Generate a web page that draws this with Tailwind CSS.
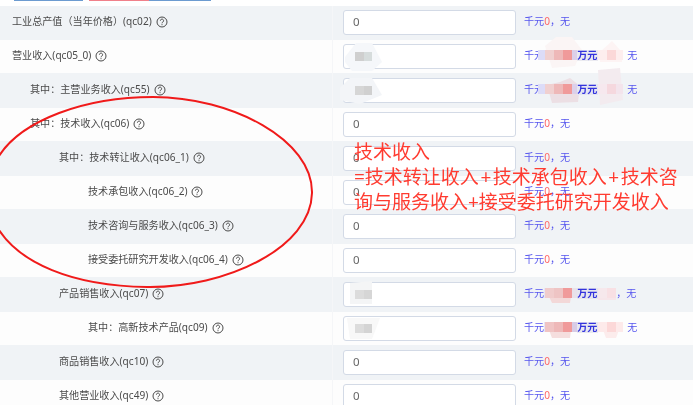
<!DOCTYPE html>
<html lang="zh-CN">
<head>
    <meta charset="UTF-8">
    <title>技术收入</title>
    <script src="https://cdn.jsdelivr.net/npm/@tailwindcss/browser@4"></script>
</head>
<body class="bg-white">
    <div id="page" class="relative h-[405px] w-[693px] overflow-hidden font-['Noto_Sans','Noto_Sans_CJK_SC',sans-serif] text-[10.1px] text-[#4a4a4a] blur-[0.4px]">

        <!-- top buttons, cut off by the screenshot -->
        <div class="flex h-[6px] items-start pl-[14px]">
            <div class="h-[1px] w-[69px] bg-[#6c9bd0]"></div>
            <div class="ml-[6px] h-[1px] w-[60px] bg-[#f0808a]"></div>
            <div class="h-[1px] w-[62px] bg-[#6c9bd0]"></div>
        </div>

        <!-- row 1 -->
        <div class="flex h-[34px] items-center bg-[#f0f3f6]">
            <div class="flex h-full w-[333px] items-center gap-[4px] border-r border-[#f5f6f8] pb-[3px] pl-[12px]"><span>工业总产值（当年价格）(qc02)</span>
                <svg class="h-[12px] w-[12px]" viewBox="0 0 12 12" fill="none" stroke="#4a4a4a"><circle cx="6" cy="6" r="5"/><path d="M4.4 4.7a1.6 1.6 0 1 1 2.5 1.3c-.6.4-.9.7-.9 1.3M6 8.2v1"/></svg></div>
            <div class="mb-[1.5px] ml-[10px] flex h-[24.5px] w-[173px] items-center rounded-[3px] border border-[#d3dae6] bg-white pb-[2px] pl-[9px] text-[11.5px] text-[#666]">0</div>
            <div class="mb-[3px] ml-[8px] flex"><span class="text-[#5555ee]">千元</span><span class="text-[#ff6666]">0</span><span class="text-[#5555ee]">，无</span></div>
        </div>

        <!-- row 2 -->
        <div class="flex h-[34px] items-center bg-[#fdfdfd] shadow-[inset_0_-1px_0_#f0f3f6]">
            <div class="flex h-full w-[333px] items-center gap-[4px] border-r border-[#f5f6f8] pb-[3px] pl-[12px]"><span>营业收入(qc05_0)</span>
                <svg class="h-[12px] w-[12px]" viewBox="0 0 12 12" fill="none" stroke="#4a4a4a"><circle cx="6" cy="6" r="5"/><path d="M4.4 4.7a1.6 1.6 0 1 1 2.5 1.3c-.6.4-.9.7-.9 1.3M6 8.2v1"/></svg></div>
            <div class="mb-[1.5px] ml-[10px] flex h-[24.5px] w-[173px] items-center rounded-[3px] border border-[#d3dae6] bg-white pl-[11px]">
                <div class="relative z-10 flex"><div class="h-[9px] w-[9px] bg-[#cfcfcf]"></div><div class="h-[9px] w-[8px] bg-[#d6dcdc]"></div></div>
            </div>
            <div class="mb-[3px] ml-[8px] flex items-center"><span class="text-[#5555ee]">千元</span>
                <div class="relative z-10 -ml-[6px] flex items-center">
                    <div class="h-[10px] w-[7px] bg-[#dcdcf8]"></div><div class="h-[10px] w-[9px] bg-[#f0d0d0]"></div><div class="h-[10px] w-[9px] bg-[#eeb8b8]"></div><div class="h-[10px] w-[9px] bg-[#f09a9a]"></div><div class="h-[10px] w-[5px] bg-[#dcd0ea]"></div>
                    <span class="w-[21px] bg-[#eaeaf0] font-bold leading-[11px] text-[#3333dd]">万元</span>
                    <div class="h-[10px] w-[9px] bg-[#fdeeee]"></div><div class="h-[10px] w-[9px] bg-[#fbd8d8]"></div><div class="h-[10px] w-[7px] bg-[#fdeeee]"></div>
                </div>
                <span class="ml-[4px] text-[#5555ee]">无</span></div>
        </div>

        <!-- row 3 -->
        <div class="flex h-[34px] items-center bg-[#f0f3f6]">
            <div class="flex h-full w-[333px] items-center gap-[4px] border-r border-[#f5f6f8] pb-[3px] pl-[30px]"><span>其中：主营业务收入(qc55)</span>
                <svg class="h-[12px] w-[12px]" viewBox="0 0 12 12" fill="none" stroke="#4a4a4a"><circle cx="6" cy="6" r="5"/><path d="M4.4 4.7a1.6 1.6 0 1 1 2.5 1.3c-.6.4-.9.7-.9 1.3M6 8.2v1"/></svg></div>
            <div class="mb-[1.5px] ml-[10px] flex h-[24.5px] w-[173px] items-center rounded-[3px] border border-[#d3dae6] bg-white pl-[11px]">
                <div class="relative z-10 flex"><div class="h-[9px] w-[9px] bg-[#d6d6d6]"></div><div class="h-[9px] w-[8px] bg-[#d0d0d0]"></div></div>
            </div>
            <div class="mb-[3px] ml-[8px] flex items-center"><span class="text-[#5555ee]">千元</span>
                <div class="relative z-10 -ml-[6px] flex items-center">
                    <div class="h-[10px] w-[7px] bg-[#dcdcf8]"></div><div class="h-[10px] w-[9px] bg-[#f0d0d0]"></div><div class="h-[10px] w-[9px] bg-[#eeb8b8]"></div><div class="h-[10px] w-[9px] bg-[#f09a9a]"></div><div class="h-[10px] w-[5px] bg-[#dcd0ea]"></div>
                    <span class="w-[21px] bg-[#e4e6f2] font-bold leading-[11px] text-[#3333dd]">万元</span>
                    <div class="h-[10px] w-[9px] bg-[#f6e8ee]"></div><div class="h-[10px] w-[9px] bg-[#f5d8de]"></div><div class="h-[10px] w-[7px] bg-[#f3e4ec]"></div>
                </div>
                <span class="ml-[4px] text-[#5555ee]">无</span></div>
        </div>

        <!-- row 4 -->
        <div class="flex h-[34px] items-center bg-[#fdfdfd] shadow-[inset_0_-1px_0_#f0f3f6]">
            <div class="flex h-full w-[333px] items-center gap-[4px] border-r border-[#f5f6f8] pb-[3px] pl-[30px]"><span>其中：技术收入(qc06)</span>
                <svg class="h-[12px] w-[12px]" viewBox="0 0 12 12" fill="none" stroke="#4a4a4a"><circle cx="6" cy="6" r="5"/><path d="M4.4 4.7a1.6 1.6 0 1 1 2.5 1.3c-.6.4-.9.7-.9 1.3M6 8.2v1"/></svg></div>
            <div class="mb-[1.5px] ml-[10px] flex h-[24.5px] w-[173px] items-center rounded-[3px] border border-[#d3dae6] bg-white pb-[2px] pl-[9px] text-[11.5px] text-[#666]">0</div>
            <div class="mb-[3px] ml-[8px] flex"><span class="text-[#5555ee]">千元</span><span class="text-[#ff6666]">0</span><span class="text-[#5555ee]">，无</span></div>
        </div>

        <!-- row 5 -->
        <div class="flex h-[34px] items-center bg-[#f0f3f6]">
            <div class="flex h-full w-[333px] items-center gap-[4px] border-r border-[#f5f6f8] pb-[3px] pl-[59px]"><span>其中：技术转让收入(qc06_1)</span>
                <svg class="h-[12px] w-[12px]" viewBox="0 0 12 12" fill="none" stroke="#4a4a4a"><circle cx="6" cy="6" r="5"/><path d="M4.4 4.7a1.6 1.6 0 1 1 2.5 1.3c-.6.4-.9.7-.9 1.3M6 8.2v1"/></svg></div>
            <div class="mb-[1.5px] ml-[10px] flex h-[24.5px] w-[173px] items-center rounded-[3px] border border-[#d3dae6] bg-white pb-[2px] pl-[9px] text-[11.5px] text-[#666]">0</div>
            <div class="mb-[3px] ml-[8px] flex"><span class="text-[#5555ee]">千元</span><span class="text-[#ff6666]">0</span><span class="text-[#5555ee]">，无</span></div>
        </div>

        <!-- row 6 -->
        <div class="flex h-[34px] items-center bg-[#fdfdfd] shadow-[inset_0_-1px_0_#f0f3f6]">
            <div class="flex h-full w-[333px] items-center gap-[4px] border-r border-[#f5f6f8] pb-[3px] pl-[88px]"><span>技术承包收入(qc06_2)</span>
                <svg class="h-[12px] w-[12px]" viewBox="0 0 12 12" fill="none" stroke="#4a4a4a"><circle cx="6" cy="6" r="5"/><path d="M4.4 4.7a1.6 1.6 0 1 1 2.5 1.3c-.6.4-.9.7-.9 1.3M6 8.2v1"/></svg></div>
            <div class="mb-[1.5px] ml-[10px] flex h-[24.5px] w-[173px] items-center rounded-[3px] border border-[#d3dae6] bg-white pb-[2px] pl-[9px] text-[11.5px] text-[#666]">0</div>
            <div class="mb-[3px] ml-[8px] flex"><span class="text-[#5555ee]">千元</span><span class="text-[#ff6666]">0</span><span class="text-[#5555ee]">，无</span></div>
        </div>

        <!-- row 7 -->
        <div class="flex h-[34px] items-center bg-[#f0f3f6]">
            <div class="flex h-full w-[333px] items-center gap-[4px] border-r border-[#f5f6f8] pb-[3px] pl-[88px]"><span>技术咨询与服务收入(qc06_3)</span>
                <svg class="h-[12px] w-[12px]" viewBox="0 0 12 12" fill="none" stroke="#4a4a4a"><circle cx="6" cy="6" r="5"/><path d="M4.4 4.7a1.6 1.6 0 1 1 2.5 1.3c-.6.4-.9.7-.9 1.3M6 8.2v1"/></svg></div>
            <div class="mb-[1.5px] ml-[10px] flex h-[24.5px] w-[173px] items-center rounded-[3px] border border-[#d3dae6] bg-white pb-[2px] pl-[9px] text-[11.5px] text-[#666]">0</div>
            <div class="mb-[3px] ml-[8px] flex"><span class="text-[#5555ee]">千元</span><span class="text-[#ff6666]">0</span><span class="text-[#5555ee]">，无</span></div>
        </div>

        <!-- row 8 -->
        <div class="flex h-[34px] items-center bg-[#fdfdfd] shadow-[inset_0_-1px_0_#f0f3f6]">
            <div class="flex h-full w-[333px] items-center gap-[4px] border-r border-[#f5f6f8] pb-[3px] pl-[88px]"><span>接受委托研究开发收入(qc06_4)</span>
                <svg class="h-[12px] w-[12px]" viewBox="0 0 12 12" fill="none" stroke="#4a4a4a"><circle cx="6" cy="6" r="5"/><path d="M4.4 4.7a1.6 1.6 0 1 1 2.5 1.3c-.6.4-.9.7-.9 1.3M6 8.2v1"/></svg></div>
            <div class="mb-[1.5px] ml-[10px] flex h-[24.5px] w-[173px] items-center rounded-[3px] border border-[#d3dae6] bg-white pb-[2px] pl-[9px] text-[11.5px] text-[#666]">0</div>
            <div class="mb-[3px] ml-[8px] flex"><span class="text-[#5555ee]">千元</span><span class="text-[#ff6666]">0</span><span class="text-[#5555ee]">，无</span></div>
        </div>

        <!-- row 9 -->
        <div class="flex h-[34px] items-center bg-[#f0f3f6]">
            <div class="flex h-full w-[333px] items-center gap-[4px] border-r border-[#f5f6f8] pb-[3px] pl-[59px]"><span>产品销售收入(qc07)</span>
                <svg class="h-[12px] w-[12px]" viewBox="0 0 12 12" fill="none" stroke="#4a4a4a"><circle cx="6" cy="6" r="5"/><path d="M4.4 4.7a1.6 1.6 0 1 1 2.5 1.3c-.6.4-.9.7-.9 1.3M6 8.2v1"/></svg></div>
            <div class="mb-[1.5px] ml-[10px] flex h-[24.5px] w-[173px] items-center rounded-[3px] border border-[#d3dae6] bg-white pl-[11px]">
                <div class="relative z-10 flex"><div class="h-[9px] w-[9px] bg-[#dcdcdc]"></div><div class="h-[9px] w-[8px] bg-[#d6d6d6]"></div></div>
            </div>
            <div class="mb-[3px] ml-[8px] flex items-center"><span class="text-[#5555ee]">千元</span>
                <div class="relative z-10 flex items-center">
                    <div class="h-[10px] w-[1px] bg-[#e6e6f6]"></div><div class="h-[10px] w-[9px] bg-[#f0cccc]"></div><div class="h-[10px] w-[9px] bg-[#eec4c4]"></div><div class="h-[10px] w-[9px] bg-[#f09a9a]"></div><div class="h-[10px] w-[5px] bg-[#e8e2ea]"></div>
                    <span class="w-[21px] bg-[#e6e6ee] font-bold leading-[11px] text-[#3333dd]">万元</span>
                    <div class="h-[10px] w-[9px] bg-[#f6e8ec]"></div><div class="h-[10px] w-[9px] bg-[#f8e0e4]"></div>
                </div>
                <span class="text-[#5555ee]">，无</span></div>
        </div>

        <!-- row 10 -->
        <div class="flex h-[34px] items-center bg-[#fdfdfd] shadow-[inset_0_-1px_0_#f0f3f6]">
            <div class="flex h-full w-[333px] items-center gap-[4px] border-r border-[#f5f6f8] pb-[3px] pl-[88px]"><span>其中：高新技术产品(qc09)</span>
                <svg class="h-[12px] w-[12px]" viewBox="0 0 12 12" fill="none" stroke="#4a4a4a"><circle cx="6" cy="6" r="5"/><path d="M4.4 4.7a1.6 1.6 0 1 1 2.5 1.3c-.6.4-.9.7-.9 1.3M6 8.2v1"/></svg></div>
            <div class="mb-[1.5px] ml-[10px] flex h-[24.5px] w-[173px] items-center rounded-[3px] border border-[#d3dae6] bg-white pl-[11px]">
                <div class="relative z-10 flex"><div class="h-[9px] w-[9px] bg-[#dcdcdc]"></div><div class="h-[9px] w-[8px] bg-[#d4d4d4]"></div></div>
            </div>
            <div class="mb-[3px] ml-[8px] flex items-center"><span class="text-[#5555ee]">千元</span>
                <div class="relative z-10 flex items-center">
                    <div class="h-[10px] w-[1px] bg-[#e6e6f6]"></div><div class="h-[10px] w-[9px] bg-[#f0c4c4]"></div><div class="h-[10px] w-[9px] bg-[#eeb8b8]"></div><div class="h-[10px] w-[9px] bg-[#f09a9a]"></div><div class="h-[10px] w-[5px] bg-[#d8cce6]"></div>
                    <span class="w-[21px] bg-[#e8e8f0] font-bold leading-[11px] text-[#3333dd]">万元</span>
                    <div class="h-[10px] w-[9px] bg-[#fdeaea]"></div><div class="h-[10px] w-[9px] bg-[#fcd8d8]"></div><div class="h-[10px] w-[7px] bg-[#fdeaea]"></div>
                </div>
                <span class="ml-[4px] text-[#5555ee]">无</span></div>
        </div>

        <!-- row 11 -->
        <div class="flex h-[34px] items-center bg-[#f0f3f6]">
            <div class="flex h-full w-[333px] items-center gap-[4px] border-r border-[#f5f6f8] pb-[3px] pl-[59px]"><span>商品销售收入(qc10)</span>
                <svg class="h-[12px] w-[12px]" viewBox="0 0 12 12" fill="none" stroke="#4a4a4a"><circle cx="6" cy="6" r="5"/><path d="M4.4 4.7a1.6 1.6 0 1 1 2.5 1.3c-.6.4-.9.7-.9 1.3M6 8.2v1"/></svg></div>
            <div class="mb-[1.5px] ml-[10px] flex h-[24.5px] w-[173px] items-center rounded-[3px] border border-[#d3dae6] bg-white pb-[2px] pl-[9px] text-[11.5px] text-[#666]">0</div>
            <div class="mb-[3px] ml-[8px] flex"><span class="text-[#5555ee]">千元</span><span class="text-[#ff6666]">0</span><span class="text-[#5555ee]">，无</span></div>
        </div>

        <!-- row 12 -->
        <div class="flex h-[34px] items-center bg-[#fdfdfd]">
            <div class="flex h-full w-[333px] items-center gap-[4px] border-r border-[#f5f6f8] pb-[3px] pl-[59px]"><span>其他营业收入(qc49)</span>
                <svg class="h-[12px] w-[12px]" viewBox="0 0 12 12" fill="none" stroke="#4a4a4a"><circle cx="6" cy="6" r="5"/><path d="M4.4 4.7a1.6 1.6 0 1 1 2.5 1.3c-.6.4-.9.7-.9 1.3M6 8.2v1"/></svg></div>
            <div class="mb-[1.5px] ml-[10px] flex h-[24.5px] w-[173px] items-center rounded-[3px] border border-[#d3dae6] bg-white pb-[2px] pl-[9px] text-[11.5px] text-[#666]">0</div>
            <div class="mb-[3px] ml-[8px] flex"><span class="text-[#5555ee]">千元</span><span class="text-[#ff6666]">0</span><span class="text-[#5555ee]">，无</span></div>
        </div>

        <!-- pale smears left round the mosaics -->
        <svg class="absolute left-0 top-0 h-[405px] w-[693px]" viewBox="0 0 693 405">
            <polygon points="345,57 356,43 372,43 382,62 372,71 352,71 345,62" fill="#f5f7fa"/>
            <polygon points="340,88 350,78 372,78 382,95 360,104 340,100" fill="#f3f5f8"/>
            <polygon points="350,283 372,281 372,304 350,304" fill="#f4f5f6"/>
            <polygon points="347,318 380,318 372,339 350,339" fill="#f8f8f8"/>
            <polygon points="545,46 556,37 572,37 582,50 575,66 552,68" fill="#fbf5f5"/>
            <polygon points="600,52 612,41 622,52 622,62 600,62" fill="#fdf4f4"/>
            <polygon points="547,85 560,82 570,78 580,86 578,102 552,103" fill="#ecdfe4"/>
            <polygon points="598,70 620,68 623,100 600,105" fill="#f3ebef"/>
            <polygon points="546,290 572,290 570,303 552,303" fill="#f3d8d8"/>
            <polygon points="596,290 616,290 616,300 598,300" fill="#f6e6ea"/>
            <polygon points="546,322 572,322 570,338 552,338" fill="#f5dede"/>
            <polygon points="600,322 622,322 616,338 606,338" fill="#fcecec"/>
        </svg>

        <!-- red annotation drawn on top -->
        <svg class="absolute left-0 top-0 z-20 h-[405px] w-[693px]" viewBox="0 0 693 405" fill="none">
            <path d="M-1 156C22 120 85 97 153 97C232 97 313 140 312 193C311 248 226 288 147 287C70 286 20 262 -1 230" stroke="#f01a1a" stroke-width="2"/>
        </svg>
        <div class="absolute left-[354px] top-[140px] z-20 text-[19px] leading-[25px] whitespace-nowrap text-[#ff3b30]">技术收入<br>=技术转让收入<span class="mx-[1.5px]">+</span>技术承包收入<span class="mx-[1.5px]">+</span>技术咨<br>询与服务收入+接受委托研究开发收入</div>
    </div>
</body>
</html>
